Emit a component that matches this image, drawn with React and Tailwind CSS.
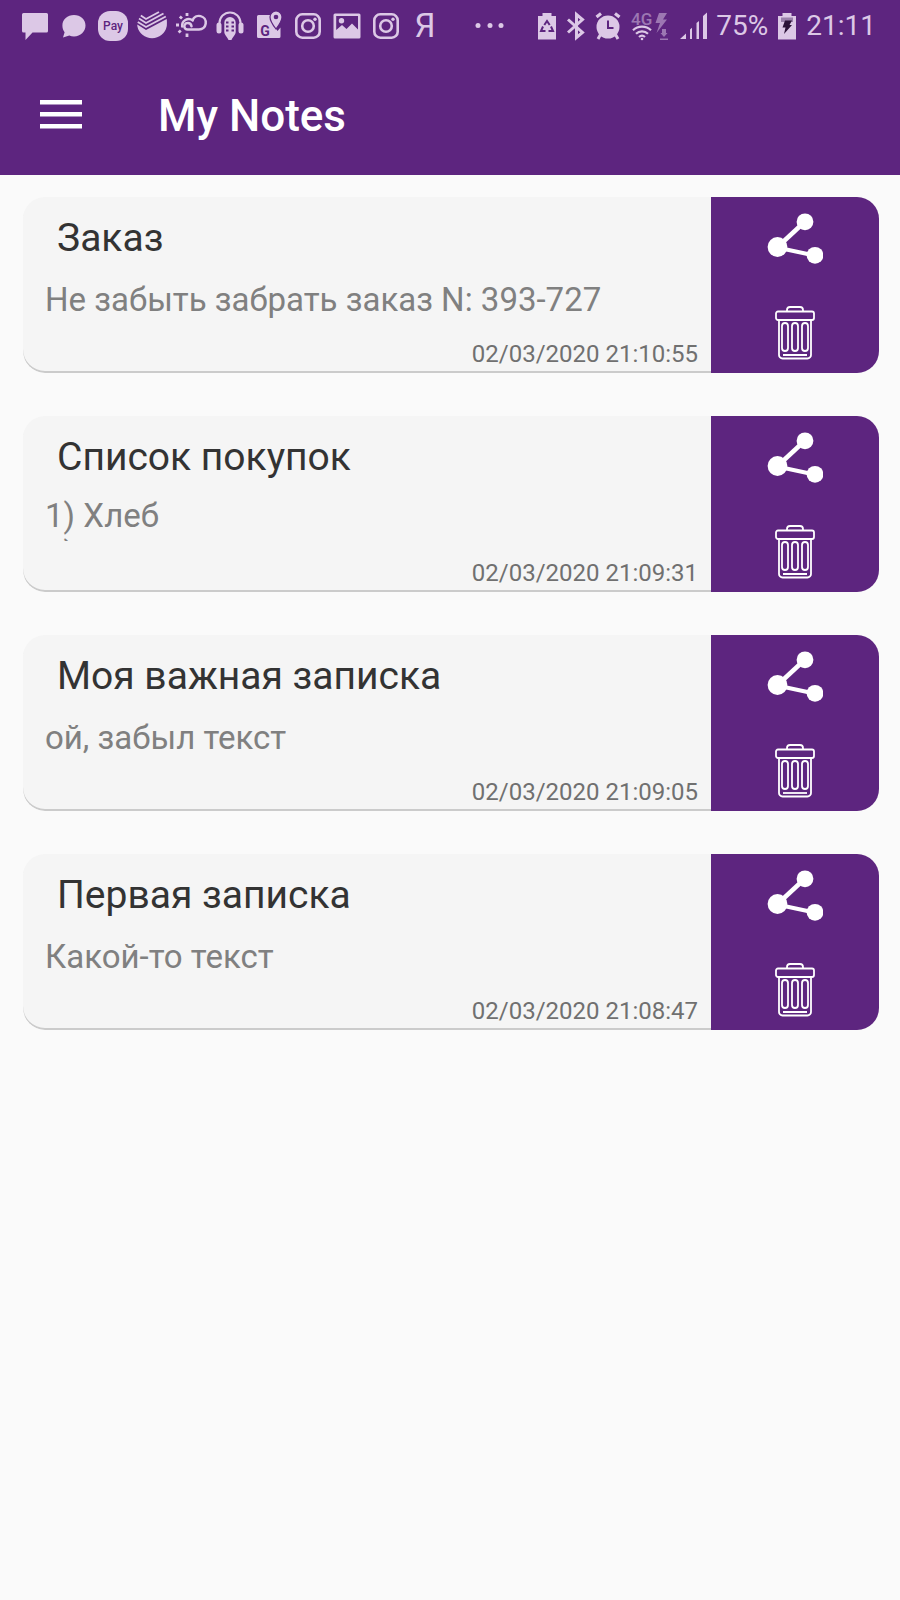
import { useState } from 'react'

const NOTES = [
  { id: 1, title: 'Заказ', text: 'Не забыть забрать заказ N: 393-727', date: '02/03/2020 21:10:55' },
  { id: 2, title: 'Список покупок', text: '1) Хлеб\n2)', date: '02/03/2020 21:09:31' },
  { id: 3, title: 'Моя важная записка', text: 'ой, забыл текст', date: '02/03/2020 21:09:05' },
  { id: 4, title: 'Первая записка', text: 'Какой-то текст', date: '02/03/2020 21:08:47' },
]

// ==========================================
// Status bar
// ==========================================
function Icon({ children, className = 'w-[30px]', box = '0 0 30 30' }) {
  return (
    <svg viewBox={box} className={`h-[30px] shrink-0 overflow-visible ${className}`} fill="currentColor" aria-hidden="true">
      {children}
    </svg>
  )
}

function Instagram() {
  return (
    <Icon>
      <g fill="none" stroke="currentColor" strokeWidth="2.6">
        <rect x="3.3" y="3.3" width="23.4" height="23.4" rx="6" />
        <circle cx="15" cy="15" r="5.8" />
      </g>
      <circle cx="22" cy="8.3" r="1.7" />
    </Icon>
  )
}

function Battery({ children }) {
  return (
    <Icon className="w-5" box="0 0 20 30">
      <path d="M5.5 2h9v3H19v23.500H1V5h4.500z" />
      {children}
    </Icon>
  )
}

function Notifications() {
  return (
    <div className="flex items-center gap-[9px]">
      <Icon>
        <path d="M3.500 2h23a1.500 1.500 0 0 1 1.500 1.500v16.500a1.500 1.500 0 0 1-1.500 1.500H12.500L5.500 29V21.500H3.500A1.500 1.500 0 0 1 2 20V3.500A1.500 1.500 0 0 1 3.500 2z" />
      </Icon>
      <Icon>
        <path d="M15 4C21.500 4 26.500 8.600 26.500 14.500S21.500 25.500 15 25.500c-1.700 0-3.300-.3-4.700-.9L4 26.500l1.600-5.200C4.200 19.500 3.400 17.200 3.400 14.500 3.400 8.600 8.500 4 15 4z" />
      </Icon>
      <Icon>
        <rect x="0" y="0" width="30" height="30" rx="12" />
        <text x="15" y="19" textAnchor="middle" fill="#5d257f" fontSize="12" fontWeight="500">Pay</text>
      </Icon>
      <Icon>
        <path d="M.3 13.500 9 19 29.700 8c.3 2 .3 4.500.1 7a15 15 0 0 1-29.500 0z" />
        <g fill="none" stroke="currentColor" strokeWidth="1.900">
          <path d="M.8 11 9 16 28.800 5.500" />
          <path d="M2 7.500 9 12 26.500 2.500" />
          <path d="M3.800 4.500 9 8 22 1" />
        </g>
      </Icon>
      <Icon>
        <g fill="none" stroke="currentColor" strokeWidth="2.500" strokeLinecap="round">
          <path d="M15.500 15.200a3.900 3.900 0 0 0-4-3.100 3.200 3.200 0 0 0 0 6.400H23a6.800 6.800 0 1 0-6.400-9.200" />
          <path d="M16.600 9.300a6.600 6.600 0 0 0-10.400 6.200" />
        </g>
        <g stroke="currentColor" strokeWidth="2.800">
          <path d="M11 2v3M3.800 5.500l2.200 2M0 14h3M2.600 21.500l2.200-2M11 22.500v3.500" />
        </g>
      </Icon>
      <Icon>
        <path d="M4.500 15v-3a10.500 10.500 0 0 1 21 0v3" fill="none" stroke="currentColor" strokeWidth="2" />
        <rect x="1.500" y="11.500" width="5" height="11" rx="2.500" />
        <rect x="23.500" y="11.500" width="5" height="11" rx="2.500" />
        <path d="M15 6a5.700 5.700 0 0 1 5.700 5.700V21c0 3-3.200 5-4.200 8h-3c-1-3-4.200-5-4.200-8v-9.300A5.700 5.700 0 0 1 15 6z" />
        <path d="M11 11.500h2.500M16.500 11.500H19M11 15.500h2.500M16.500 15.500H19M11 19.500h2.500M16.500 19.500H19" stroke="#5d257f" strokeWidth="1.800" />
      </Icon>
      <Icon>
        <path d="M4.500 4h14v8l5 8 3-3.500V25.500a1.500 1.500 0 0 1-1.500 1.500H4.500A1.500 1.500 0 0 1 3 25.500V5.500A1.500 1.500 0 0 1 4.500 4z" />
        <path
          d="M22 0a6 6 0 0 1 6 6c0 4.500-6 12-6 12S16 10.500 16 6a6 6 0 0 1 6-6z"
          stroke="#5d257f"
          strokeWidth="1.200"
        />
        <circle cx="22" cy="6" r="2.300" fill="#5d257f" />
        <text x="11" y="24.500" textAnchor="middle" fill="#5d257f" fontSize="14" fontWeight="700">G</text>
      </Icon>
      <Instagram />
      <Icon>
        <path
          fillRule="evenodd"
          d="M3 2.500h24A1.500 1.500 0 0 1 28.500 4v22A1.500 1.500 0 0 1 27 27.500H3A1.500 1.500 0 0 1 1.500 26V4A1.500 1.500 0 0 1 3 2.500zM4.200 5v14L10 14l4.500 4L20 12.500l6 6V5z"
        />
        <circle cx="9.500" cy="9.800" r="2.700" />
      </Icon>
      <Instagram />
      <span className="w-[30px] text-center text-[33px] leading-8">Я</span>
    </div>
  )
}

function StatusBar() {
  return (
    <div className="flex h-[52px] items-center pr-6 pl-5 text-[#dcc8e6]">
      <Notifications />
      <Icon className="ml-8 w-[34px]" box="0 0 34 30">
        <circle cx="6" cy="14.500" r="2.500" />
        <circle cx="18" cy="14.500" r="2.500" />
        <circle cx="29" cy="14.500" r="2.500" />
      </Icon>
      <div className="ml-auto flex items-center gap-[9px]">
        <Battery>
          <g fill="none" stroke="#5d257f" strokeWidth="2">
            <path d="M7.300 14 10 10l2.700 4" />
            <path d="M14 15.500l2 4.500h-4.500" />
            <path d="M8.500 20H4l2-4.500" />
          </g>
        </Battery>
        <Icon className="w-5" box="0 0 20 30">
          <path d="M2 8.500 16.500 21.500 10.500 26.500V3.500L16.500 8.500 2 21.500" fill="none" stroke="currentColor" strokeWidth="3" />
        </Icon>
        <Icon className="w-[26px]" box="0 0 26 30">
          <circle cx="13" cy="16" r="11.500" />
          <path d="M5.500 23.500 3 28M20.500 23.500 23 28" stroke="currentColor" strokeWidth="3" />
          <path d="M1.500 6 6 2.500M24.500 6 20 2.500" stroke="currentColor" strokeWidth="3.200" />
          <path d="M13 9.500V17h5.500" fill="none" stroke="#5d257f" strokeWidth="2" />
        </Icon>
        <Icon className="w-10" box="0 0 40 30">
          <text x="1" y="14" fontSize="17" fontWeight="500" opacity=".5">4G</text>
          <g fill="none" stroke="currentColor" strokeWidth="2.200">
            <path d="M3 19.200a13 13 0 0 1 18 0" />
            <path d="M6 22.800a8.500 8.500 0 0 1 12 0" />
            <path d="M9 26a4.500 4.500 0 0 1 6 0" />
          </g>
          <circle cx="12" cy="28" r="1.300" />
          <g opacity=".5">
            <path d="M29 2h8l-4 6.500h4L26.500 22l3.500-10h-4.500z" />
            <path d="M32 18h4v4h1.500L34 26l-3.500-4H32zM30 27.500h8V29h-8z" />
          </g>
        </Icon>
        <Icon className="w-7" box="0 0 28 30">
          <path d="M1 28 7 22.500V28zM11 18.500l2-1.800V28h-2zM17.500 12l2.500-2v18h-2.500zM24 5l4-3.500V28h-4z" />
        </Icon>
        <span className="text-[28px] leading-8">75%</span>
        <Battery>
          <path d="M4 6.500h12V11H4z" fill="#9a80ab" />
          <path d="M8 9.500h7L12.500 14H15l-8 9 1.500-6.500H5.500z" fill="#2b1238" />
        </Battery>
        <span className="text-[28px] leading-8">21:11</span>
      </div>
    </div>
  )
}

// ==========================================
// Note card
// ==========================================
function NoteCard({ note, onDelete }) {
  const multiline = note.text.includes('\n')

  return (
    <li className="flex overflow-hidden rounded-[22px] bg-[#f5f5f5]">
      <article className="min-w-0 flex-1 rounded-l-[22px] pt-[17px] pb-[5px] shadow-[inset_0_-2px_0_#cbcbcb]">
        <h2 className="truncate pl-[34px] text-[39px] leading-[48px] text-[#333333]">{note.title}</h2>
        <div className={`mt-4 flex h-11 overflow-hidden pl-[22px] ${multiline ? 'items-start' : 'items-center'}`}>
          <p className="text-[33px] leading-[38px] whitespace-pre-line text-[#808080]">{note.text}</p>
        </div>
        <time className="mt-[18px] block pr-[13px] text-right text-[24px] leading-7 text-[#707070]">{note.date}</time>
      </article>
      <div className="flex w-[168px] shrink-0 flex-col items-center gap-[41px] bg-[#5d257f] pt-4 text-white">
        <button type="button" aria-label="Поделиться">
          <svg viewBox="0 0 56 52" className="block h-[52px] w-14" fill="currentColor">
            <path d="M10 34.500 37.500 9" stroke="currentColor" strokeWidth="4.500" />
            <path d="M10 34.500 47.500 42.500" stroke="currentColor" strokeWidth="4" />
            <circle cx="38" cy="8.800" r="8.400" />
            <circle cx="10.500" cy="34" r="9.900" />
            <circle cx="48" cy="42.300" r="8.400" />
          </svg>
        </button>
        <button type="button" aria-label="Удалить" onClick={() => onDelete(note.id)}>
          <svg viewBox="0 0 40 54" className="block h-[54px] w-10" fill="none" stroke="currentColor" strokeWidth="1.800">
            <path d="M12 5.500V4a3 3 0 0 1 3-3h10a3 3 0 0 1 3 3v1.500" />
            <rect x="1" y="5.500" width="38" height="8.500" rx="2" />
            <path d="M4 14v35a3.500 3.500 0 0 0 3.500 3.500h25A3.500 3.500 0 0 0 36 49V14" />
            <rect x="7" y="17" width="6" height="28" rx="3" />
            <rect x="17" y="17" width="6" height="28" rx="3" />
            <rect x="27" y="17" width="6" height="28" rx="3" />
            <path d="M8 49h24" />
          </svg>
        </button>
      </div>
    </li>
  )
}

export default function App() {
  const [notes, setNotes] = useState(NOTES)

  const handleDelete = (id) => {
    setNotes(notes.filter((note) => note.id !== id))
  }

  return (
    <div className="min-h-screen bg-[#fafafa] font-['Roboto',sans-serif]">
      <header className="bg-[#5d257f] pb-7">
        <StatusBar />
        <div className="mt-8 flex h-[63px] items-center pl-10 text-white">
          <button type="button" aria-label="Меню" className="pb-1">
            <svg viewBox="0 0 42 30" className="block h-[30px] w-[42px]" fill="currentColor">
              <path d="M0 1h42v4.500H0zM0 13h42v4.500H0zM0 25h42v4.500H0z" />
            </svg>
          </button>
          <h1 className="ml-[76px] text-[44px] leading-[56px] font-medium">My Notes</h1>
        </div>
      </header>
      <ul className="flex flex-col gap-[43px] pt-[22px] pr-[21px] pb-6 pl-[23px]">
        {notes.map((note) => (
          <NoteCard key={note.id} note={note} onDelete={handleDelete} />
        ))}
      </ul>
    </div>
  )
}
